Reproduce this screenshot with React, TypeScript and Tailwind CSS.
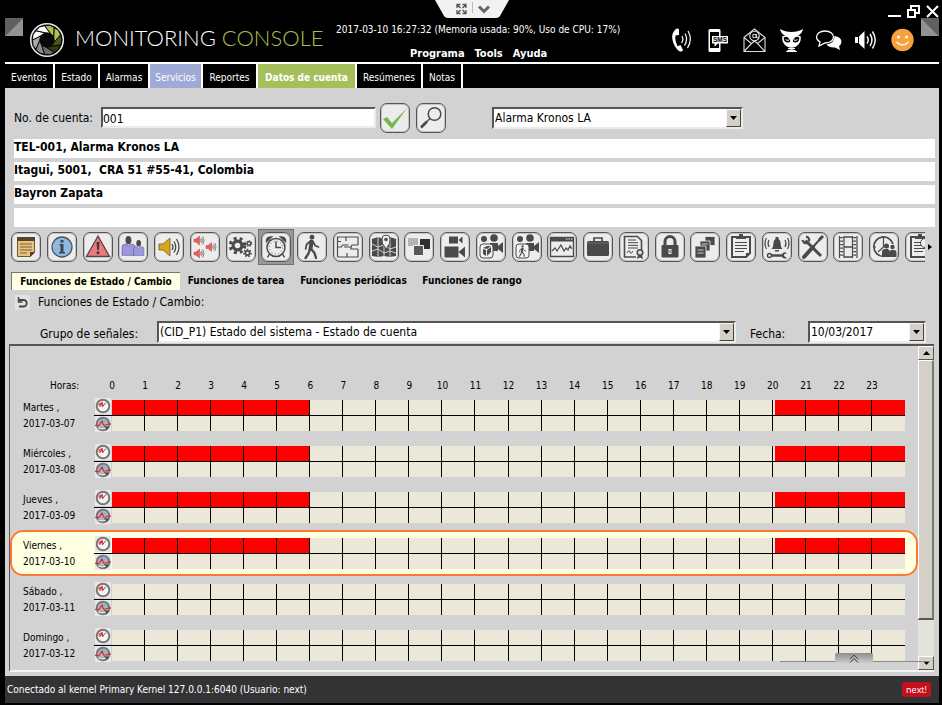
import React from "react";

const DARK = "#4a4a4a";

function Bevel({ children, className }: { children: React.ReactNode; className: string }) {
  return (
    <div className={"relative flex border-t-2 border-l-2 border-r-2 border-b-2 border-t-[#555] border-l-[#555] border-r-[#ecebe4] border-b-[#ecebe4] bg-white " + className}>
      {children}
    </div>
  );
}

function Drop({ id, value, className, label }: { id: string; value: string; className: string; label?: string }) {
  return (
    <Bevel className={className}>
      <select id={id} aria-label={label} className="h-full w-full appearance-none bg-white pr-4 pl-px text-[12px] text-black outline-none">
        <option>{value}</option>
      </select>
      <span className="pointer-events-none absolute top-0 right-0 bottom-0 flex w-[15px] items-center justify-center border border-t-[#f5f4f0] border-r-[#444] border-b-[#444] border-l-[#f5f4f0] bg-[#d4d0c8]">
        <svg width="7" height="4" viewBox="0 0 7 4"><path d="M0 0h7L3.500 4z" /></svg>
      </span>
    </Bevel>
  );
}

function Person({ x, y, s, fill }: { x: number; y: number; s: number; fill: string }) {
  return (
    <g transform={`translate(${x} ${y}) scale(${s})`}>
      <path d="M0 21V12q0-3 3-3h2l2 2 2-2h2q3 0 3 3v9z" fill={fill} stroke="#55559a" strokeWidth=".7" />
      <ellipse cx="7" cy="4.500" rx="3.200" ry="4.500" fill={DARK} />
    </g>
  );
}

function Speaker({ x, y, s, fill, edge }: { x: number; y: number; s: number; fill: string; edge: string }) {
  return (
    <g transform={`translate(${x} ${y}) scale(${s})`}>
      <path d="M0 6h4l7-6v18l-7-6H0z" fill={fill} stroke={edge} strokeWidth=".8" />
      <g fill="none" stroke={DARK} strokeWidth="1.300">
        <path d="M13 6q2 3 0 6M15 3.500q3.500 5.500 0 11M17.500 1q5 8 0 16" />
      </g>
    </g>
  );
}

function Gear({ cx, cy, r, w }: { cx: number; cy: number; r: number; w: number }) {
  const step = (2 * Math.PI * (r + w / 2)) / 16;
  return (
    <g fill="none" stroke={DARK}>
      <circle cx={cx} cy={cy} r={r - w / 2} strokeWidth={w} />
      <circle cx={cx} cy={cy} r={r + w / 2 - 0.4} strokeWidth={w} strokeDasharray={`${step} ${step}`} />
    </g>
  );
}

const walker = (
  <g fill="none" stroke={DARK} strokeLinecap="round" strokeLinejoin="round">
    <circle cx="15" cy="5.200" r="2.400" fill={DARK} stroke="none" />
    <path d="M14.500 9.500 13.500 17" strokeWidth="4" />
    <path d="m13 17-1.500 4.500L8.500 26M14 17l3.500 4 1.500 5" strokeWidth="2.300" />
    <path d="m13 9.500-3.500 3-.8 4.500M16 9.500l2 4 3.500 1.500" strokeWidth="1.700" />
  </g>
);

const cameraPair = (
  <g fill={DARK}>
    <circle cx="8" cy="7" r="3" /><circle cx="18" cy="6" r="3.800" />
    <path d="M5 11h17v8H14v-8zM22 14l5-4v11l-5-4z" />
    <rect x="4" y="12" width="13" height="14" rx="3" fill="#f2f2f2" stroke={DARK} />
  </g>
);

const clipboard = (
  <g>
    <path d="M6 5h18v16l-4 4H6z" fill="#eee" stroke={DARK} strokeWidth="2" />
    <path d="M20 26v-5h5z" fill={DARK} />
    <path d="M10 7V4h3V2h4v2h3v3z" fill={DARK} />
    <path d="M9 10.500h12M9 13.500h12M9 16.500h12M9 19.500h9" stroke={DARK} strokeWidth="1.200" />
  </g>
);

const tools: { name: string; art: React.ReactNode }[] = [
  { name: "Notas", art: <g><path d="M6.500 5.500h17v15l-4 4h-13z" fill="#e6c27e" stroke="#6b5633" /><path d="M6 5h18v4H6z" fill="#54452f" /><path d="M9 12h12M9 15h12M9 18h12M9 21h7" stroke="#7d6236" strokeWidth="1.200" /><path d="M19 25v-5h5z" fill="#54452f" /></g> },
  { name: "Información", art: <g><circle cx="15" cy="15" r="10" fill="#8fb9de" stroke="#4b5663" strokeWidth="1.300" /><path d="M12.500 12h4v8h1.500v1.500h-6V20h1.500v-6.500h-1zM13.500 8h3v2.600h-3z" fill="#384757" /></g> },
  { name: "Alertas", art: <g><path d="M15 4 26.500 24.500h-23z" fill="#e87c7c" stroke="#5a4444" strokeWidth="1.300" /><path d="M13.500 10h3l-.7 8h-1.600zM13.700 19.500h2.600v2.500h-2.600z" fill="#473535" /></g> },
  { name: "Usuarios", art: <g><Person x={4} y={4} s={0.920} fill="#9d98dc" /><Person x={15.500} y={8} s={0.740} fill="#9d98dc" /></g> },
  { name: "Sonido", art: <Speaker x={5} y={6} s={1} fill="#dba520" edge="#7a5a14" /> },
  { name: "Zonas", art: <g><Speaker x={4} y={4} s={0.500} fill="#f05a5a" edge="#a33" /><Speaker x={4} y={17} s={0.500} fill="#f05a5a" edge="#a33" /><Speaker x={16} y={10.500} s={0.500} fill="#f05a5a" edge="#a33" /></g> },
  { name: "Configuración", art: <g><Gear cx={11.500} cy={13.500} r={6} w={3.200} /><Gear cx={23} cy={11.500} r={2.400} w={1.300} /><Gear cx={21.500} cy={21} r={3} w={1.700} /></g> },
  { name: "Funciones horarias", art: <g fill="none" stroke={DARK} strokeWidth="1.500"><circle cx="15" cy="15.500" r="9" /><circle cx="15" cy="15.500" r="6.500" strokeWidth=".8" strokeDasharray="1 2.400" /><path d="M15 9.500v6h5M8.500 22l-2 3.500M21.500 22l2 3.500" /><path d="M5.500 9.500Q5 5 10.500 5zM24.500 9.500Q25 5 19.500 5z" fill={DARK} /></g> },
  { name: "Recorridos", art: walker },
  { name: "Plano", art: <g fill="none" stroke={DARK} strokeWidth="1.200"><path d="M4.500 25V5H13v4M13 5h12v8M4.500 25H25v-8M4.500 15h4l1-2h6M11 15h7l1-2h6M18 15v2h7M4.500 9.500H8M14 21v4" /></g> },
  { name: "Mapa", art: <g><path d="m3 7 6-2 6 2 6-2 6 2v17l-6 1-6-1-6 1-6-1z" fill={DARK} /><path d="M9 5v20M15 14v11M21 5v20M3 12l6 3 6-2 6 4 6-2M3 19l6-2 6 4 6-2 6 2" stroke="#dcdcdc" strokeWidth=".9" fill="none" /><path d="M17 17q-5-6-4-10a4 4 0 0 1 8 0Q22 11 17 17z" fill="#eee" stroke={DARK} /><circle cx="17" cy="7.500" r="1.800" fill={DARK} /></g> },
  { name: "Particiones", art: <g><path d="M4 6h10v8H4z" fill="#b5b5b5" /><path d="M16 7h10v10H16z" fill="#2f2f2f" /><path d="M9.500 13.500h10v10h-10z" fill="#585858" stroke="#f2f2f2" /></g> },
  { name: "Cámaras", art: <g fill={DARK}><path d="M9 4.500h9v7H9zM18.500 8l4-3.500v7zM4.500 14.500h14v11h-14zM18.500 20l6.500-5.500v11z" /></g> },
  { name: "Video objetos", art: <g>{cameraPair}<path d="m7 17 3 1v6l-3-2zM11 18l4-3v5l-4 4zM7 16l4-2h4l-4 3z" fill={DARK} /></g> },
  { name: "Video personas", art: <g>{cameraPair}<g transform="translate(3.500 12) scale(.47)">{walker}</g></g> },
  { name: "Monitor", art: <g fill="none" stroke={DARK}><path d="M3.500 5.500h23v19h-23z" strokeWidth="1.400" /><path d="M3 7.500h24" strokeWidth="4" /><path d="M19 7h1.500M21.500 7H23M24 7h1.500" stroke="#eee" /><path d="m5 19 3-3 2 3 4-6 3 6 2-3 2 2 2-4 2 3" strokeWidth="1.200" /></g> },
  { name: "Maletín", art: <g fill={DARK}><rect x="4" y="9" width="22" height="15" rx="1.500" /><path d="M11 9V6h8v3" fill="none" stroke={DARK} strokeWidth="1.700" /><path d="M4 11h22" stroke="#888" strokeWidth=".6" /></g> },
  { name: "Certificado", art: <g><path d="M17 25H5.500V4.500h13l4 4V18" fill="#eee" stroke={DARK} strokeWidth="1.600" /><path d="M9 8h8M9 10.700h10M9 13.400h10M9 16h10M8 21q2-4 3-1t3-1" stroke={DARK} fill="none" /><circle cx="21" cy="20.500" r="2.800" fill="#ddd" stroke={DARK} strokeWidth="1.500" /><path d="m19 23-1 4 3-1.500 3 1.500-1-4" fill={DARK} /></g> },
  { name: "Seguridad", art: <g><path d="M10 14V9.500a5 5 0 0 1 10 0V14" fill="none" stroke={DARK} strokeWidth="3" /><rect x="6.500" y="13" width="17" height="12.500" rx="1" fill={DARK} /><path d="M13.500 17h3v5h-3z" fill="#eee" /><path d="M14.500 18h1v3h-1z" fill={DARK} /></g> },
  { name: "Archivos", art: <g fill={DARK} stroke="#eee" strokeWidth=".8"><path d="M15 4.500h10v9H15z" /><path d="M10 9h10v10H10z" /><path d="M5 14h11v12H5z" /><path d="M7.500 18h6M7.500 21h6M12 12h6" /></g> },
  { name: "Reportes", art: clipboard },
  { name: "Mantenimiento", art: <g><path d="M9.500 17q2-2 2-6 0-4 3.500-4.500 3.500.5 3.500 4.500 0 4 2 6z" fill={DARK} /><path d="M13.500 5h3v2h-3zM13 18h4v1.500h-4z" fill={DARK} /><path d="M7 8q-2 3.500 0 7M4.500 6q-3 5.500 0 11M23 8q2 3.500 0 7M25.500 6q3 5.500 0 11" fill="none" stroke={DARK} strokeWidth="1.200" /><path d="M7 23.500h15" stroke={DARK} strokeWidth="2.500" /><circle cx="7.500" cy="23.500" r="2" fill="#eee" stroke={DARK} strokeWidth="1.500" /><path d="M25 21q-3-2-5 1v3q2 2.500 5 1l-3-2v-1.500z" fill={DARK} /></g> },
  { name: "Herramientas", art: <g stroke={DARK} fill="none"><path d="M7.500 8.500 23 24" strokeWidth="3" /><path d="M4.500 8q1 4 5 3M8 4.500q4 1 3 5" strokeWidth="2.200" /><path d="M24 5 14 16" strokeWidth="2" /><path d="m15 15-9 10" strokeWidth="4" strokeLinecap="round" /><path d="m25 4-4 4" strokeWidth="3" /></g> },
  { name: "Película", art: <g stroke={DARK} fill="none"><path d="M6.500 4v22M11 4v22M19.500 4v22M24 4v22" strokeWidth="1.200" /><path d="M8.700 5v21M21.800 5v21" strokeWidth="3" strokeDasharray="1.200 2.300" /><path d="M11 5h9M11 15h9M11 25h9" strokeWidth="1.600" /></g> },
  { name: "Asistencia", art: <g><path d="M14 24.500A9.800 9.800 0 1 1 24 12" fill="none" stroke={DARK} strokeWidth="1.700" /><path d="M14.500 7v8L9 20M5 15h2M14.500 5v2" stroke={DARK} fill="none" strokeWidth="1.200" /><circle cx="17.500" cy="14" r="2.500" fill={DARK} /><circle cx="23.500" cy="15" r="2.200" fill={DARK} /><path d="M13 25v-5q0-3 3-3h3l2 2 1-1h3q2.500 0 2.500 3v4z" fill={DARK} /></g> },
  { name: "Auditoría", art: <g>{clipboard}<circle cx="20" cy="11" r="4.500" fill="#eee" stroke={DARK} /></g> },
];

const tabs = [
  ["Eventos", "w-[50px] bg-black"],
  ["Estado", "w-[45px] bg-black"],
  ["Alarmas", "w-[50px] bg-black"],
  ["Servicios", "w-[53px] bg-[#a0aad6]"],
  ["Reportes", "w-[55px] bg-black"],
  ["Datos de cuenta", "w-[99px] bg-[#a5bf5b] font-bold"],
  ["Resúmenes", "w-[66px] bg-black"],
  ["Notas", "w-[40px] bg-black"],
];

const days = [
  ["Martes", "2017-03-07", true],
  ["Miércoles", "2017-03-08", true],
  ["Jueves", "2017-03-09", true],
  ["Viernes", "2017-03-10", true],
  ["Sábado", "2017-03-11", false],
  ["Domingo", "2017-03-12", false],
] as [string, string, boolean][];

const hours = Array.from({ length: 24 }, (_, i) => i);

const polar = (r: number, deg: number) => `${r * Math.cos((deg * Math.PI) / 180)} ${r * Math.sin((deg * Math.PI) / 180)}`;

function Logo() {
  const blades = ["#a9c052", "#a9c052", "#4b5820", "#2f3810", "#6e6e6e", "#8b8b8b", "#a8a8a8", "#fff", "#fff"];
  return (
    <svg width="36" height="36" viewBox="-18 -18 36 36" className="shrink-0">
      <circle r="16.300" fill="#080808" stroke="#e8e8e8" strokeWidth="1.600" />
      {blades.map((c, i) => {
        const a = i * 40 - 100;
        return <path key={c + i} d={`M${polar(14.5, a)}L${polar(15, a + 20)} ${polar(14.5, a + 40)} ${polar(7.5, a + 75)} ${polar(7.5, a + 35)}z`} fill={c} stroke="#080808" strokeWidth="1" />;
      })}
    </svg>
  );
}

const headerIcons: { name: string; art: React.ReactNode }[] = [
  { name: "Llamadas", art: <g transform="translate(2 0)"><path d="M5 1q-5 4-3.500 11T8 23q3 1.500 4-1l-2.500-5-3 1.200Q3.500 12 4.500 7.500L8 7 8 1.500Q6.500 0 5 1z" fill="#fff" /><path d="M11 8q2 3.500-.5 7M14 5.500q3.500 5.500-.5 12M17 3q5 8-.5 17" fill="none" stroke="#fff" strokeWidth="1.200" /></g> },
  { name: "SMS", art: <g transform="translate(1 0)"><path d="M3 1h9q1.500 0 1.500 1.500v20q0 1.500-1.500 1.500H3q-1.500 0-1.500-1.500v-20Q1.500 1 3 1z" fill="#fff" /><path d="M3 4h9v16H3z" fill="#000" /><path d="M5 8h16v7.500H11l-3.500 3v-3H5z" fill="#fff" /><text x="6" y="14" fontSize="6.500" fontWeight="bold" fontFamily="Liberation Sans, sans-serif">SMS</text></g> },
  { name: "Correo", art: <g fill="none" stroke="#ddd" strokeWidth="1.100"><path d="M1 9.500 11.500 1 22 9.500v14H1zM1 9.500l7.500 6L1 23.500M22 9.500l-7.500 6 7.500 8M8.500 15.500l3-2.500 3 2.500" /><circle cx="11.500" cy="8" r="4.800" /><circle cx="11.500" cy="8" r="1.800" /><path d="M13.300 6v3q1 1.500 2.500 0" /></g> },
  { name: "Vigilancia", art: <g><path d="M2.500 8a9.300 9.300 0 1 0 18 0z" fill="#fff" /><path d="M3.700 9.500q0 5 4 5 2.500 0 3.800-2.500 1.300 2.500 3.800 2.500 4 0 4-5L11.500 7z" fill="#000" /><path d="M0 1q5 3 11.500 3T23 1q-1 4.500-4.500 6.500Q14 9 12.800 13l-1.300 3.500L10.200 13Q9 9 4.500 7.500 1 5.500 0 1z" fill="#fff" /><path d="M5.500 11.500q1.500 1.500 3.500.5M14 12q2 1 3.500-.5" stroke="#fff" fill="none" /><path d="M8 20.500h7M6.500 23.500q5-3.500 10 0z" fill="#fff" stroke="#fff" /></g> },
  { name: "Mensajes", art: <g transform="translate(-2 2)"><path d="M10 1c5 0 8.500 2.500 8.500 6S15 13 10 13L4 16l1-4Q1.500 10 1.500 7c0-3.500 3.500-6 8.500-6z" fill="none" stroke="#fff" strokeWidth="1.300" /><path d="M19.500 6q7 1 7 6-.5 3-2.500 4l1 4-5-2.500q-6 .5-8.500-3 8-1 8-8.500z" fill="#fff" /></g> },
  { name: "Volumen", art: <g><path d="M1 9h3v6H1zM5 8.500 10.500 3v18L5 15.500z" fill="#fff" /><path d="M13 8.500q2.500 3.500 0 7M16 6q4 6 0 12M18.500 3.500q5.500 8.500 0 17" fill="none" stroke="#fff" strokeWidth="1.400" /></g> },
  { name: "Estado de ánimo", art: <g><circle cx="11.500" cy="12" r="11.200" fill="#f6a13c" /><circle cx="7.500" cy="9" r="1.600" fill="#fff" /><circle cx="15.500" cy="9" r="1.600" fill="#fff" /><path d="M5.500 14q6 6 12 0" fill="none" stroke="#fff" strokeWidth="1.500" /></g> },
];

function Header() {
  return (
    <header className="relative flex h-16 items-start border-b-2 border-white text-white">
      <svg width="18" height="18" className="mt-[18px] shrink-0"><path d="M0 0h18L0 18z" fill="#625f62" /><path d="M18 0v18H0z" fill="#929294" /></svg>
      <div className="mt-[22px] ml-1.5 flex items-start gap-[10px]">
        <Logo />
        <h1 className="mt-1 w-[261px] font-[Lato] text-[22px] leading-6 font-light whitespace-nowrap">
          MONITORING <span className="text-[#a9c052]">CONSOLE</span>
        </h1>
      </div>
      <div className="mt-[23px] whitespace-nowrap">
        <p className="text-[10px] leading-[14px]">2017-03-10 16:27:32 (Memoria usada: 90%, Uso de CPU: 17%)</p>
        <nav className="mt-[10px] ml-[74px] flex gap-[10px] text-[11px] leading-[14px] font-bold">
          <button>Programa</button><button>Tools</button><button>Ayuda</button>
        </nav>
      </div>
      <div className="absolute top-0 left-[430px] flex">
        <svg width="74" height="18" viewBox="0 0 74 18">
          <path d="M0 0h74L65 16q-1 2-4 2H13q-3 0-4-2z" fill="#f2f2f2" />
          <g stroke="#555" strokeWidth="1.300" fill="none"><path d="M22 8V4.500h3.500M22 4.500l3.500 3.500M31 8V4.500h-3.500M31 4.500 27.500 8M22 10v3.500h3.500M22 13.500l3.500-3.500M31 10v3.500h-3.500M31 13.500 27.500 10" /></g>
          <path d="M37.500 2v11" stroke="#bbb" /><path d="m44 6.500 5 5 5-5" stroke="#666" strokeWidth="3" fill="none" />
        </svg>
      </div>
      <div className="ml-auto flex flex-col">
        <div className="flex h-[18px] items-end justify-end gap-[6px]">
          <button aria-label="Minimizar" className="mb-px h-0.5 w-[13px] bg-white" />
          <button aria-label="Restaurar"><svg width="13" height="13" fill="none" stroke="#fff" strokeWidth="2"><path d="M4 5V1h8v7H9" /><path d="M1 5h7v7H1z" /></svg></button>
          <button aria-label="Cerrar"><svg width="13" height="13" stroke="#fff" strokeWidth="2"><path d="m1 1 11 11M12 1 1 12" /></svg></button>
        </div>
        <div className="flex items-start">
          <div className="mt-[10px] mr-[7px] flex gap-[14px]">
            {headerIcons.map((i) => (
              <button key={i.name} aria-label={i.name}><svg width="23" height="24" viewBox="0 0 23 24" className="overflow-visible">{i.art}</svg></button>
            ))}
          </div>
          <svg width="18" height="18"><path d="M0 0h18v18z" fill="#625f62" /><path d="M0 0v18h18z" fill="#929294" /></svg>
        </div>
      </div>
    </header>
  );
}

const iconBox = "flex size-[30px] shrink-0 items-center justify-center rounded-[7px] border border-[#555] bg-[#ececec] shadow-[inset_0_0_0_1px_#c4c4c4]";

function DialIcon({ lower }: { lower?: boolean }) {
  return (
    <svg width="16" height="16" viewBox="0 0 16 16" className="bg-[#e8e8e8]">
      <circle cx="8" cy="8" r="6.300" fill={lower ? "#b4b4b4" : "#f4f4f4"} stroke="#777" strokeWidth="2" />
      {lower ? (
        <g fill="none"><path d="M8 2.500q4 0 4.500 3.500L9 7z" fill="#7fb9ea" /><path d="m9 10 5 1-3 3z" fill="#444" /><path d="M3 12q5 2 8 0" stroke="#eee" /><path d="M0 9.500h4L7 5l1.500 4h3l1.500-1h3" stroke="#e02030" strokeWidth="1.200" /></g>
      ) : (
        <g fill="none"><path d="M3.500 8V5.500L8 3.500V7z" fill="#ea6060" /><path d="m7 9 4-4.500" stroke="#555" /><path d="m4.500 9 2.500-4 1 3.500" stroke="#d22" /></g>
      )}
    </svg>
  );
}

function DayRow({ day, date, busy }: { day: string; date: string; busy: boolean }) {
  const active = date === "2017-03-10";
  return (
    <div className={"relative flex h-[46px] items-start pt-2 pr-[13px] pl-[13px] " + (active ? "rounded-[13px] bg-[#ffffe1] shadow-[inset_0_0_0_2px_#fb7838]" : "")}>
      <div className="w-[71px] shrink-0 text-[10px] leading-4">
        <div>{day} ,</div>
        <div>{date}</div>
      </div>
      <div className="relative flex min-w-0 flex-1">
        <div className="-mt-0.5 flex w-[18px] shrink-0 flex-col items-center gap-[2px]">
          <DialIcon />
          <DialIcon lower />
        </div>
        <div className="relative h-[31px] flex-1 bg-[#ebe8d9]">
          {busy && [[0, 6], [20.06, 24]].map(([a, b]) => (
            <div key={a} className="absolute top-0 h-[15px] bg-[#f00]" style={{ left: `${(a / 24) * 100}%`, width: `${((b - a) / 24) * 100}%` }} />
          ))}
          <div className="absolute inset-0 grid grid-cols-24">
            {hours.map((h) => <span key={h} className={h < 23 ? "border-r border-black" : ""} />)}
          </div>
        </div>
        <div className="absolute top-[15px] right-0 left-0 h-px bg-black" />
      </div>
    </div>
  );
}

function ScrollBar() {
  const btn = "flex h-[14px] shrink-0 items-center justify-center border border-t-white border-l-white border-r-[#555] border-b-[#555] bg-[#d4d0c8]";
  return (
    <div className="flex w-4 shrink-0 flex-col bg-[#e4e2dd]">
      <button aria-label="Subir" className={btn}><svg width="7" height="4"><path d="M0 4h7L3.500 0z" /></svg></button>
      <div className="flex-[260_1_0%] border border-t-white border-r-2 border-b-2 border-l-white border-r-[#777] border-b-[#555] bg-[#d4d0c8]" />
      <div className="flex-[36_1_0%]" />
      <button aria-label="Bajar" className={btn}><svg width="7" height="4"><path d="M0 0h7L3.500 4z" /></svg></button>
    </div>
  );
}

export default function App() {
  return (
    <div className="flex min-h-screen flex-col bg-black pr-[3px] pb-[3px] pl-[5px] font-['DejaVu_Sans_Condensed','DejaVu_Sans',sans-serif] text-[12px] text-black">
      <Header />
      <nav className="flex h-6 text-[10px] text-white">
        {tabs.map(([name, cls]) => (
          <button key={name} className={"shrink-0 border-r-2 border-white pt-0.5 text-center whitespace-nowrap " + cls}>{name}</button>
        ))}
      </nav>

      <main className="flex flex-1 flex-col bg-[#d2d2d2] pb-1">
        <div className="flex h-[51px] items-center pt-2 pl-[9px]">
          <label htmlFor="account" className="w-[87px]">No. de cuenta:</label>
          <Bevel className="h-[21px] w-[275px]">
            <input id="account" defaultValue="001" className="w-full bg-white pt-0.5 text-[12px] outline-none" />
          </Bevel>
          <button aria-label="Aceptar" className={iconBox + " ml-1"}>
            <svg width="26" height="26" viewBox="0 0 26 26"><path d="m1 14 4-2 5 6L25 3 10 24z" fill="#74b94c" /></svg>
          </button>
          <button aria-label="Buscar" className={iconBox + " ml-1.5"}>
            <svg width="26" height="26" viewBox="0 0 26 26" fill="none" stroke={DARK}><circle cx="16.500" cy="9" r="6.300" strokeWidth="1.500" /><path d="m12 13.500-3 3" strokeWidth="1.500" /><path d="m9 16.500-6 6" strokeWidth="2.600" /></svg>
          </button>
          <div className="ml-[46px]"><Drop id="company" label="Empresa" value="Alarma Kronos LA" className="h-[22px] w-[251px]" /></div>
        </div>

        <div className="flex flex-col gap-1 pr-1 pl-[9px] text-[12px] leading-[17px] font-bold whitespace-pre">
          <p className="h-[19px] bg-white">TEL-001, Alarma Kronos LA</p>
          <p className="h-[19px] bg-white">{"Itagui, 5001,  CRA 51 #55-41, Colombia"}</p>
          <p className="h-[19px] bg-white">Bayron Zapata</p>
          <p className="h-[19px] bg-white" />
        </div>

        <div className="mt-0.5 flex items-center pl-1.5">
          <div className="min-w-0 flex-1 overflow-hidden">
            <div className="-mr-[10px] flex h-9 items-center justify-between">
              {tools.map((t, i) => (
                <div key={t.name} className={i === 7 ? "-mx-[3px] border border-[#707070] bg-[#989898] p-0.5" : ""}>
                  <button aria-label={t.name} className={iconBox}>
                    <svg width="30" height="30" viewBox="0 0 30 30" className="shrink-0">{t.art}</svg>
                  </button>
                </div>
              ))}
            </div>
          </div>
          <button aria-label="Más" className="ml-[3px] w-[11px]"><svg width="4" height="6"><path d="M0 0v6l4-3z" /></svg></button>
        </div>

        <nav className="mt-1.5 flex h-[19px] items-center pl-1.5 text-[10px] font-bold whitespace-nowrap">
          <button className="h-[18px] w-[169px] border-t border-l border-[#777] bg-[#ffffe6]">Funciones de Estado / Cambio</button>
          <button className="w-[112px]">Funciones de tarea</button>
          <button className="w-[123px]">Funciones periódicas</button>
          <button className="w-[114px]">Funciones de rango</button>
        </nav>

        <div className="mt-1 flex h-4 items-center gap-2 pl-2.5">
          <button aria-label="Recargar" className="flex size-[15px] items-center justify-center bg-[#e2e2e2]">
            <svg width="11" height="11" fill="none" stroke="#444" strokeWidth="1.800"><path d="M2 3h4.500a3 3 0 0 1 0 6.500H2" /><path d="M1.500 0v5h4" strokeWidth="1.500" /></svg>
          </button>
          <h2>Funciones de Estado / Cambio:</h2>
        </div>

        <div className="mt-[9px] flex h-[25px] items-center pr-[13px] pl-[35px]">
          <label htmlFor="group" className="w-[117px] shrink-0 pt-1">Grupo de señales:</label>
          <div className="flex-1"><Drop id="group" value="(CID_P1) Estado del sistema - Estado de cuenta" className="h-[22px] w-full" /></div>
          <label htmlFor="date" className="mr-[21px] ml-[14px] w-[37px] pt-1">Fecha:</label>
          <Drop id="date" value="10/03/2017" className="h-[22px] w-[118px]" />
        </div>

        <section className="relative mr-[5px] ml-1 flex flex-1 border-t-2 border-b-2 border-l border-t-[#555] border-b-[#f4f4f4] border-l-[#555]">
          <div className="min-w-0 flex-1 pb-[2px]">
            <div className="flex h-[46px] items-end pr-[13px] pl-10 text-[10px] leading-3">
              <span className="w-[62px] shrink-0">Horas:</span>
              <div className="grid flex-1 grid-cols-24">
                {hours.map((h) => <span key={h} className="flex w-0 justify-center">{h}</span>)}
              </div>
            </div>
            {days.map(([day, date, busy]) => <DayRow key={date} day={day} date={date} busy={busy} />)}
          </div>
          <ScrollBar />
          <button aria-label="Expandir" className="absolute right-1 bottom-[7px]">
            <svg width="150" height="10" viewBox="0 0 150 10"><defs><linearGradient id="handle" x2="0" y2="1"><stop stopColor="#8c8c8c" /><stop offset="1" stopColor="#ccc" /></linearGradient></defs><path d="M0 8.500h150" stroke="#8a8a8a" /><path d="M55 10V2q0-2 2-2h34q2 0 2 2v8z" fill="url(#handle)" /><path d="m70 6 4-4 4 4M70 9.500l4-4 4 4" fill="none" stroke="#444" /></svg>
          </button>
        </section>
      </main>

      <footer className="flex h-[27px] items-center justify-between bg-[#333335] pr-2 pl-0.5 text-[10px] text-white">
        <span>Conectado al kernel Primary Kernel 127.0.0.1:6040 (Usuario: next)</span>
        <button className="h-[15px] w-[29px] rounded-[3px] bg-[#c4101c] font-[Open_Sans] text-[9px] leading-[14px]">next!</button>
      </footer>
    </div>
  );
}
